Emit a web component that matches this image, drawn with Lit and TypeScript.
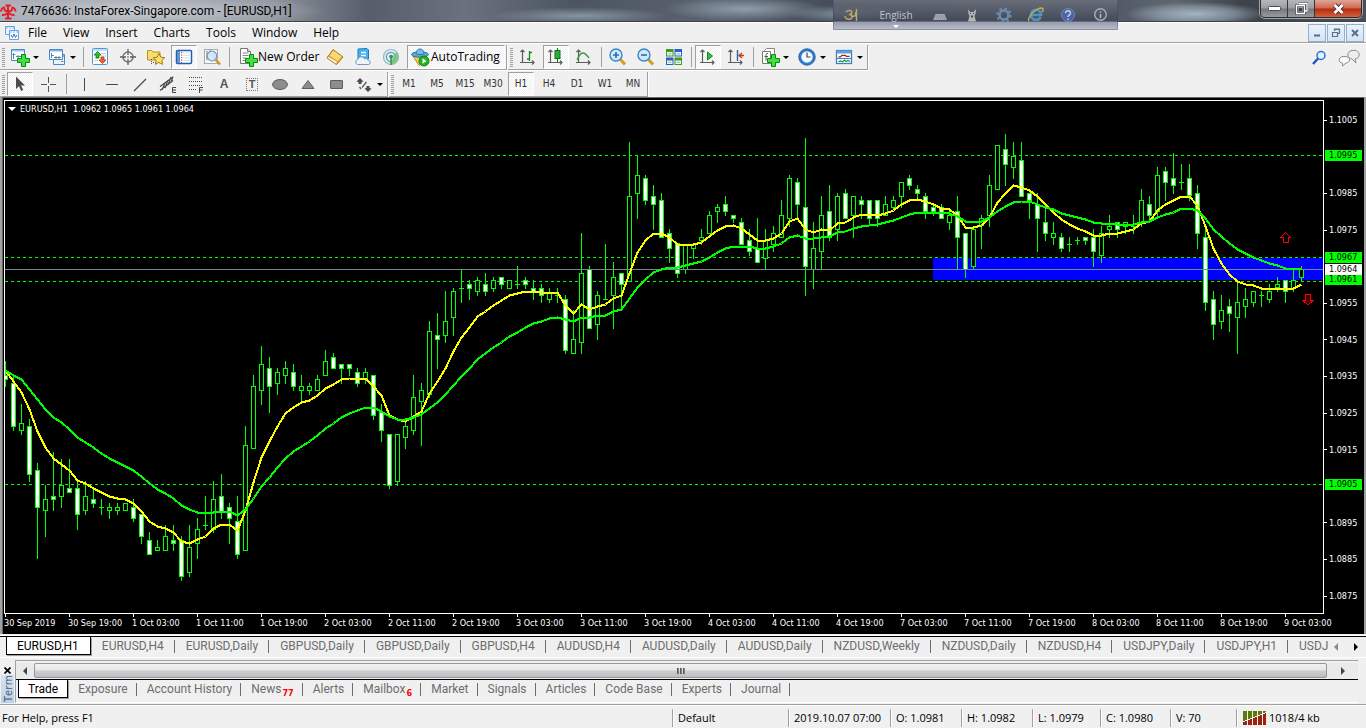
import { LitElement, html, svg, css, TemplateResult } from 'lit';
import { customElement, property, state } from 'lit/decorators.js';
import { classMap } from 'lit/directives/class-map.js';

/* ---------- market data, in plot units ---------- */

// high, body top, body bottom, low, 1 = bearish (filled)
const CANDLES: number[][] = [
  [361,375,380,387,1],[375,383,427,431,1],[404,423,431,435,0],[419,426,475,482,1],[463,470,508,559,1],
  [485,499,511,537,0],[452,496,500,511,1],[459,485,497,508,0],[459,488,493,493,1],[480,488,515,530,1],
  [481,496,511,515,0],[489,499,504,508,1],[499,507,508,515,0],[503,507,511,519,0],[503,507,511,515,0],
  [503,503,511,511,0],[499,507,519,522,1],[514,514,537,544,1],[532,540,555,555,1],[540,547,551,551,0],
  [525,536,551,551,0],[525,540,544,551,1],[536,540,577,581,1],[525,547,573,577,0],[518,529,544,559,0],
  [496,525,526,530,0],[481,499,530,533,0],[474,496,512,519,1],[503,507,519,544,1],[496,521,555,559,1],
  [426,445,551,551,0],[375,386,449,449,0],[346,364,391,405,0],[357,368,387,413,1],[368,372,384,395,0],
  [361,368,376,384,0],[364,372,387,391,1],[375,386,391,402,0],[383,386,391,395,0],[375,379,391,391,0],
  [350,361,376,376,0],[353,357,369,369,1],[364,364,369,384,1],[364,364,369,376,1],[368,372,384,387,1],
  [368,372,380,384,0],[375,375,416,420,1],[404,412,431,442,1],[434,434,486,489,1],[434,434,482,486,0],
  [422,426,438,449,0],[375,397,431,435,0],[383,390,402,446,0],[321,331,395,398,0],[313,335,340,369,1],
  [291,321,336,343,0],[288,291,318,336,0],[269,288,289,303,0],[280,284,289,300,1],[277,280,292,296,0],
  [273,284,292,296,1],[277,280,289,292,0],[277,277,285,289,1],[280,280,289,289,0],[266,284,285,289,0],
  [277,280,285,289,1],[280,288,292,300,1],[284,288,296,303,1],[288,292,300,303,0],[288,295,296,303,0],
  [295,299,351,354,1],[310,339,354,354,0],[233,273,343,354,0],[266,269,329,329,1],[291,295,325,340,0],
  [244,299,300,300,0],[262,277,296,329,0],[273,273,285,311,1],[142,196,282,282,0],[155,175,194,219,0],
  [175,178,201,205,1],[185,196,205,230,1],[193,200,238,238,1],[229,233,249,263,1],[243,243,274,278,1],
  [244,244,270,274,0],[244,244,249,259,0],[229,237,241,245,0],[211,215,234,234,0],[204,207,212,223,0],
  [196,204,212,216,1],[215,215,219,223,1],[218,222,245,245,1],[229,240,252,256,1],[218,248,263,263,1],
  [229,240,259,270,0],[226,233,245,252,0],[200,215,238,238,0],[175,178,219,227,0],[178,182,205,219,1],
  [138,207,267,296,1],[222,248,270,289,0],[196,215,252,270,0],[185,211,238,241,1],[193,196,230,241,0],
  [189,193,219,219,1],[196,196,216,238,0],[196,200,205,219,1],[200,200,219,226,1],[200,200,219,227,1],
  [196,204,216,216,0],[196,200,208,210,0],[182,182,197,208,0],[175,178,186,190,1],[185,189,194,201,1],
  [193,196,212,219,1],[204,207,212,216,1],[204,207,219,219,1],[210,215,223,230,0],[196,211,238,270,1],
  [233,233,270,278,1],[229,229,267,270,0],[215,218,226,249,0],[175,185,216,227,0],[145,145,190,190,0],
  [134,149,165,186,1],[142,156,168,179,0],[142,160,197,197,1],[193,193,201,219,1],[193,204,219,252,1],
  [205,222,234,241,1],[222,233,238,245,0],[233,237,249,252,1],[237,244,245,252,0],[237,240,241,245,0],
  [237,237,241,245,1],[229,237,252,267,1],[226,233,256,263,0],[215,226,230,238,0],[222,222,230,238,1],
  [222,222,227,234,0],[215,226,227,234,0],[189,200,223,227,0],[196,204,216,220,1],[167,175,212,217,0],
  [167,171,183,201,1],[153,178,186,194,1],[164,182,183,190,0],[164,178,196,201,1],[185,193,234,249,1],
  [229,237,303,311,1],[291,299,325,340,1],[295,310,322,329,0],[299,306,314,332,1],[281,302,318,354,0],
  [288,299,307,318,0],[291,291,303,307,0],[291,295,296,307,0],[284,291,300,303,0],[277,284,288,292,0],
  [280,280,292,303,1],[269,280,289,292,0],[266,269,278,281,0],
];

const SLOW = [370,375,379,389,399,409,417,422,429,437,442,447,453,458,462,466,470,476,483,489,493,498,505,509,512,
  512,512,511,511,515,509,498,486,477,467,458,451,446,441,435,428,423,417,413,410,407,407,411,416,419,419,417,414,
  408,402,394,385,376,368,359,353,347,342,336,332,327,323,321,318,317,319,321,317,317,315,315,311,309,298,287,279,
  272,269,267,267,265,263,261,257,252,248,246,246,246,248,248,246,243,237,235,238,238,237,236,232,231,228,226,225,
  224,222,220,217,214,212,212,212,212,213,216,221,221,221,217,211,206,202,201,201,204,207,209,213,215,217,219,222,
  223,223,224,224,224,222,221,217,214,212,208,208,210,218,229,236,243,249,253,257,260,263,265,268,268,268];

const FAST = [370,381,392,409,431,447,458,464,470,480,483,488,492,496,498,499,503,511,521,526,528,532,541,543,539,
  536,528,524,524,530,510,482,457,441,426,413,407,402,400,395,388,384,379,378,378,378,386,395,415,419,421,416,411,
  393,381,368,351,337,327,316,311,305,300,295,293,291,291,292,292,292,305,313,304,309,306,304,298,295,273,252,240,
  233,233,237,244,244,244,242,236,230,226,225,228,234,240,240,238,233,221,218,229,232,229,230,223,222,217,214,214,
  215,213,210,204,200,199,201,204,208,209,215,227,227,225,217,202,193,185,187,190,196,204,212,219,224,228,231,235,
  235,233,233,231,229,223,221,210,204,200,196,196,205,226,248,263,274,281,284,285,288,288,288,288,288,284];

const TIMES = ['30 Sep 2019','30 Sep 19:00','1 Oct 03:00','1 Oct 11:00','1 Oct 19:00','2 Oct 03:00','2 Oct 11:00',
  '2 Oct 19:00','3 Oct 03:00','3 Oct 11:00','3 Oct 19:00','4 Oct 03:00','4 Oct 11:00','4 Oct 19:00','7 Oct 03:00',
  '7 Oct 11:00','7 Oct 19:00','8 Oct 03:00','8 Oct 11:00','8 Oct 19:00','9 Oct 03:00'];

const SCALE = ['1.1005','1.0985','1.0975','1.0955','1.0945','1.0935','1.0925','1.0915','1.0895','1.0885','1.0875'];
const MARKS: [string, string][] = [['1.0995','level'],['1.0967','level'],['1.0961','level'],['1.0905','level'],['1.0964','last']];
const LEVELS = [155, 257, 281, 484];

// share of the plot height at which a price lies
const priceTop = (p: string) => ((1.1010532 - Number(p)) / 0.0140426) * 100;

/* ---------- icons ---------- */

const ico = (body: unknown, size = 20) =>
  html`<svg class="ico" width=${size} height=${size} viewBox="0 0 20 20" aria-hidden="true">${body}</svg>`;

const plus = svg`<path d="M11.500 7.500h4v4h4v4h-4v4h-4v-4h-4v-4h4z" fill="#3fe03f" stroke="#0b8a0b"/>`;
const axes = svg`<path d="M4.500 3v13M2 15.500h14M2.500 5l2-2 2 2M14 13.500l2 2-2 2" fill="none" stroke="#5c5c5c" stroke-width="1.200"/>`;
const miniWin = svg`<path d="M1.500 2.500h13v11h-13z" fill="#fff" stroke="#4a88c8"/><path d="M2 3h12v1.500H2z" fill="#9cc6ee"/><path d="M3.500 6v6M2.500 7.500h3M6 9.500h7M8 8v3M11.500 8v3" stroke="#5a86ad" fill="none"/>`;

const ICONS: Record<string, TemplateResult> = {
  newchart: ico(svg`${miniWin}${plus}`),
  profiles: ico(svg`<path d="M6.500 7.500h11v10h-11z" fill="#eaf4fd" stroke="#4a88c8"/><path d="M7 8h10v2H7z" fill="#7db4e6"/><path d="M2.500 2.500h13v10h-13z" fill="#fff" stroke="#4a88c8"/><path d="M3 3h12v1.500H3z" fill="#7db4e6"/><path d="M4.500 6v5M4 8.500h3M7 10.500h7M9 9v3M12 9v3M14 14.500h2.500" stroke="#5a86ad" fill="none"/>`),
  market: ico(svg`<rect x="2.500" y="1.500" width="15" height="16" rx="1" fill="#fff" stroke="#4e97dc"/><path d="M3 2h14v2H3z" fill="#bfe0fa"/><path d="M11 6.500h5M11 9h5M4 13.500h4M4 11h4" stroke="#c7ccd2"/><path d="M7.500 4.500l3.500 3.500H9v3H6V8H4z" fill="#2bbf2b" stroke="#0c7a12" stroke-width=".8"/><path d="M12.500 16.500L9 13h2v-3h3v3h2z" fill="#f0602e" stroke="#b8380d" stroke-width=".8"/>`),
  target: ico(svg`<circle cx="10" cy="10" r="5" fill="none" stroke="#777" stroke-width="1.600"/><path d="M10 2v6M10 12v6M2 10h6M12 10h6" stroke="#5e5e5e" stroke-width="1.300"/><circle cx="10" cy="10" r=".8" fill="#555"/>`),
  folder: ico(svg`<path d="M1.500 3.500h4l1.500 1.500h7v8H1.500z" fill="#f7dc6f" stroke="#b9921a"/><path d="M5.500 12v6M7 15.500h3" stroke="#555" stroke-dasharray="1 1"/><path d="M13 6.500l1.800 3.700 4 .5-3 2.700.8 4-3.600-2-3.600 2 .8-4-3-2.700 4-.5z" fill="#fbe36a" stroke="#a97c10"/>`),
  navigator: ico(svg`<rect x="2.500" y="3.500" width="15" height="13" rx="1" fill="#fff" stroke="#1d5fae" stroke-width="1.500"/><path d="M3 4h3v12H3z" fill="#5a95d6"/><path d="M7 6h10M7 8.500h10M7 11h10M7 13.500h10" stroke="#cfd9e6" stroke-width=".8"/><path d="M7.500 5v11" stroke="#e33" stroke-dasharray="1 1.500"/>`),
  tester: ico(svg`<rect x="2.500" y="2.500" width="13" height="14" fill="#f8f8f8" stroke="#aaa"/><path d="M5 4v9M8 3v5M12 4v8" stroke="#777"/><circle cx="10" cy="9" r="4.800" fill="#cfe8fa" fill-opacity=".9" stroke="#6f9fc8" stroke-width="1.300"/><path d="M13.500 12.500l4.500 5" stroke="#d09a1c" stroke-width="2.600"/>`),
  order: ico(svg`<path d="M2.500 1.500h7l3 3v12h-10z" fill="#fff" stroke="#777"/><path d="M9.500 1.500v3h3" fill="#ddd" stroke="#777"/><path d="M4.500 6h6M4.500 8.500h6M4.500 11h4M4.500 13.500h3" stroke="#888"/>${plus}`),
  book: ico(svg`<path d="M8 2.500l10 7.500-6.500 7.500L2 11z" fill="#e9b53a" stroke="#a8700f"/><path d="M2 11l9.500 6.500 1-3L3 9z" fill="#fff3cf" stroke="#b27a12" stroke-width=".7"/><path d="M8.500 3.500l8 6-4 4.500-8-5.500z" fill="#f7d873"/>`),
  vps: ico(svg`<path d="M5 2l9-.5 1.500 1.500v9H5z" fill="#47b3ee" stroke="#1b78bd"/><path d="M8 5.500h5M8 8.500h5" stroke="#e9f7ff" stroke-width="1.600"/><path d="M4.500 17.500a2.600 2.600 0 0 1 .3-5 3.500 3.500 0 0 1 6.500-.8 3 3 0 0 1 4 1.800 2 2 0 0 1 0 4z" fill="#eef3fa" stroke="#7e96b8"/>`),
  signal: ico(svg`<circle cx="10" cy="10" r="7.500" fill="#dff0ea" stroke="#8fb6cc" stroke-width="1.200"/><circle cx="10" cy="10" r="4.700" fill="none" stroke="#5f9dc0" stroke-width="1.200"/><path d="M10 10V17.500A7.500 7.500 0 0 0 17.500 10a7.500 7.500 0 0 0-2-5l-3 3z" fill="#6cc067" fill-opacity=".75"/><path d="M10 10v8" stroke="#3a9a3a" stroke-width="1.600"/><circle cx="10" cy="9.500" r="1.800" fill="#3e7ea8"/>`),
  auto: ico(svg`<path d="M3 9h13l-3 7-4 2.500z" fill="#f4cf52" stroke="#b78d1b"/><ellipse cx="10" cy="7.500" rx="8.500" ry="2.700" fill="#5aa6d6" stroke="#2d77ab"/><path d="M6 6.500c0-6 8-6 8 0-2 1.500-6 1.500-8 0z" fill="#79bce4" stroke="#2d77ab"/><circle cx="14" cy="14" r="5" fill="#22b522" stroke="#108410"/><path d="M12.500 11.200l4 2.800-4 2.800z" fill="#fff"/>`),
  bars: ico(svg`${axes}<path d="M11.500 4v10M9 12h2.500M11.500 5.500H14" stroke="#138a1c" stroke-width="1.300" fill="none"/>`),
  candles: ico(svg`${axes}<path d="M11.500 1v14" stroke="#0d6e12"/><rect x="9" y="3.500" width="5" height="8" fill="#24b43a" stroke="#0d6e12"/>`),
  line: ico(svg`${axes}<path d="M3 13c4-9 7-9 12-2" fill="none" stroke="#2da23a" stroke-width="1.300"/>`),
  zoomin: ico(svg`<path d="M12 12l5 5.500" stroke="#d2a21e" stroke-width="3.200"/><circle cx="8" cy="8" r="6" fill="#cfe9fb" stroke="#3987c9" stroke-width="1.400"/><path d="M5 8h6M8 5v6" stroke="#2a6bb0" stroke-width="1.600"/>`),
  zoomout: ico(svg`<path d="M12 12l5 5.500" stroke="#d2a21e" stroke-width="3.200"/><circle cx="8" cy="8" r="6" fill="#cfe9fb" stroke="#3987c9" stroke-width="1.400"/><path d="M5 8h6" stroke="#2a6bb0" stroke-width="1.600"/>`),
  tile: ico(svg`<path d="M2 2h7.500v7.500H2z" fill="#3a9a23"/><path d="M10.500 2H18v7.500h-7.500z" fill="#2a5fce"/><path d="M2 10.500h7.500V18H2z" fill="#2a5fce"/><path d="M10.500 10.500H18V18h-7.500z" fill="#3a9a23"/><path d="M3 5h5.500v3.500H3zM11.500 5H17v3.500h-5.500zM3 13.500h5.500V17H3zM11.500 13.500H17V17h-5.500z" fill="#f4faf0"/><path d="M4 6.800h3.500M12.500 6.800H16M4 15.300h3.500M12.500 15.300H16" stroke="#8ab"/>`),
  scroll: ico(svg`${axes}<path d="M9.500 5v8l5-4z" fill="#35c048" stroke="#11821e"/>`),
  shift: ico(svg`${axes}<path d="M11.500 3v11" stroke="#2a5fae" stroke-width="1.400"/><path d="M18 8.500h-5M16 6l-3 2.500 3 2.500" fill="none" stroke="#c3401b" stroke-width="1.400"/>`),
  indicators: ico(svg`<path d="M4.500 3.500l2-2h8v11h-10z" fill="#fff" stroke="#888"/><path d="M2.500 4.500h8v12h-8z" fill="#fff" stroke="#777"/><path d="M8 6.500c-2-.5-2 1-2 2v5M4.500 9.500h3.500" fill="none" stroke="#555"/>${plus}`),
  clock: ico(svg`<circle cx="10" cy="10" r="7" fill="#f4f9ff" stroke="#2b7bd2" stroke-width="2.600"/><circle cx="10" cy="10" r="8.300" fill="none" stroke="#1a5299" stroke-width=".7"/><path d="M10 5.500V10h3.500" fill="none" stroke="#445" stroke-width="1.200"/>`),
  template: ico(svg`<rect x="2.500" y="3.500" width="15" height="13" fill="#fff" stroke="#3a7fc6" stroke-width="1.300"/><path d="M2.500 3.500h15v3h-15z" fill="#5b9fe0"/><path d="M3 11.500h14" stroke="#3a7fc6"/><path d="M4.500 9.800h2l1.500-1.500h3l1.500 1h3" fill="none" stroke="#a3221b" stroke-width="1.200"/><path d="M4.500 14.800l2-.8 2 .8 2-1.800 1.500 1.500 2-1 2 1" fill="none" stroke="#24913a" stroke-width="1.200"/>`),
  cursor: ico(svg`<path d="M6 2.500v12.500l3-2.800 2.200 4.800 2-1-2.200-4.600h4z" fill="#4b4b4b"/>`),
  cross: ico(svg`<path d="M10.500 3v6M10.500 12v6M3 10.500h6M12 10.500h6" stroke="#555" shape-rendering="crispEdges"/>`),
  vline: ico(svg`<path d="M10.500 4v13" stroke="#4a4a4a" shape-rendering="crispEdges"/>`),
  hline: ico(svg`<path d="M4 10.500h12" stroke="#4a4a4a" shape-rendering="crispEdges"/>`),
  trend: ico(svg`<path d="M4 17L16 5" stroke="#4a4a4a" stroke-width="1.200"/>`),
  channel: ico(svg`<path d="M2 12.500L15 3M2 16.500L15 6.500M4 16l3-7M7 14l3-8M10 11l3-8M13 8.500l2-6" stroke="#4a4a4a" stroke-width="1.200"/><path d="M18 13.500h-3.500v5H18M14.500 16H18" fill="none" stroke="#444"/>`),
  fibo: ico(svg`<path d="M3 3.500h14M3 7.500h14M3 11.500h14M3 15.500h8" stroke="#4a4a4a" stroke-dasharray="1 1" shape-rendering="crispEdges"/><path d="M17 13.500h-3.500V19M13.500 16h3" fill="none" stroke="#444"/>`),
  oval: ico(svg`<ellipse cx="10" cy="10.500" rx="7.500" ry="5" fill="#8c8c8c" stroke="#5d5d5d"/>`),
  triangle: ico(svg`<path d="M10 6.500l6 8H4z" fill="#8c8c8c" stroke="#5d5d5d"/>`),
  rect: ico(svg`<rect x="4.500" y="6.500" width="12" height="8" rx=".5" fill="#8c8c8c" stroke="#5d5d5d"/>`),
  shapes: ico(svg`<path d="M6 4l3.500 3.500-2 .5v2h-3V8l-2-.5z" fill="#4b4b4b"/><path d="M14 18l-3.500-3.500 2-.5v-2h3v2l2 .5z" fill="#4b4b4b"/><path d="M5.500 13l1.500 2M8 13.500l4.500-5.500" fill="none" stroke="#5d5d5d" stroke-width="1.300"/>`),
  search: ico(svg`<circle cx="12" cy="7.500" r="4" fill="#e6f1ff" stroke="#2e6fd6" stroke-width="1.500"/><path d="M9 10.500l-5 5.500" stroke="#2455b8" stroke-width="2.400"/>`),
  chat: html`<svg class="ico" width="24" height="20" viewBox="0 0 24 20" aria-hidden="true"><path d="M15 2.500c9-1.500 9 8 3 8.500l1 4-4-4c-5-.5-6-7.500 0-8.500z" fill="#eee" stroke="#8b8b8b"/><path d="M7 8.500c7-.5 7 6 2 6.500l-3.500 3v-3c-5-.5-4.500-6.500 1.500-6.500z" fill="#fafafa" stroke="#8b8b8b"/></svg>`,
};

const tbStyles = css`
  button { font: inherit; color: inherit; background: none; border: 0; padding: 0; margin: 0; }
  .ico { display: block; flex: none; }
`;

/* ---------- toolbar ---------- */

interface Tool { id: string; label: string; text?: string; drop?: boolean; on?: boolean; kind?: string; }

@customElement('tool-group')
class ToolGroup extends LitElement {
  @property({ attribute: false }) tools: Tool[] = [];

  static styles = [tbStyles, css`
    :host { display: flex; align-items: stretch; height: 25px; box-sizing: border-box; border-right: 1px solid #a0a0a0; border-bottom: 1px solid #a0a0a0;
      box-shadow: 1px 1px 0 #fff; color: #000; font: 12px/16px "Open Sans", "Noto Sans", sans-serif; }
    .grip { width: 3px; margin: 3px 1px 2px 2px; background: repeating-linear-gradient(#a0a0a0 0 1px, transparent 1px 2px); }
    .sep { width: 1px; margin: 2px 2px 2px 3px; background: #a0a0a0; }
    .sep.wide { margin: 2px 3px 2px 4px; }
    .tool { width: 28px; display: flex; align-items: center; justify-content: center; box-sizing: border-box; }
    .tool.drop { width: 37px; justify-content: flex-start; padding-left: 4px; gap: 3px; }
    .tool.order { width: 89px; justify-content: flex-start; padding-left: 6px; white-space: nowrap; }
    .tool.on { border: 1px solid; border-color: #a0a0a0 #fff #fff #a0a0a0; margin: 0 1px; width: 26px;
      background: repeating-conic-gradient(#fff 0 25%, #f0f0f0 0 50%) 0 0 / 2px 2px; }
    .tool.auto.on { width: 98px; padding-left: 2px; margin: 0 1px 0 2px; gap: 1px; justify-content: flex-start; white-space: nowrap; }
    .frame { font: 10px/14px "DejaVu Sans Condensed", "DejaVu Sans", sans-serif; color: #333; }
    .glyph { font: bold 12px/16px "Liberation Sans", sans-serif; color: #555; }
    .boxed { font: bold 11px/11px "Liberation Sans", sans-serif; color: #555; border: 1px dotted #777; width: 10px; text-align: center; }
    .tri { width: 0; height: 0; border: 3px solid transparent; border-top-color: #000; border-bottom: 0; }
  `];

  private pick(t: Tool) {
    if (t.kind !== 'frame') return;
    this.tools = this.tools.map(x => (x.kind === 'frame' ? { ...x, on: x.id === t.id } : x));
  }

  render() {
    return html`<span class="grip"></span>${this.tools.map(t => {
      if (t.id === '|') return html`<span class="sep ${t.kind ?? ''}"></span>`;
      const face = t.kind === 'frame' || t.kind === 'glyph' || t.kind === 'boxed'
        ? html`<span class=${t.kind}>${t.text}</span>`
        : html`${ICONS[t.id]}${t.text ? html`<span>${t.text}</span>` : ''}`;
      return html`<button class=${classMap({ tool: true, on: !!t.on, drop: !!t.drop, order: t.id === 'order', auto: t.id === 'auto' })}
        aria-label=${t.label} aria-pressed=${t.on ? 'true' : 'false'} @click=${() => this.pick(t)}>${face}${t.drop ? html`<i class="tri"></i>` : ''}</button>`;
    })}`;
  }
}

/* ---------- chart ---------- */

@customElement('price-chart')
class PriceChart extends LitElement {
  static styles = css`
    :host { display: grid; grid-template-columns: minmax(0, 1fr) 40px; grid-template-rows: minmax(0, 1fr) 20px; background: #000;
      color: #fff; font: 9px/12px "DejaVu Sans Condensed", "DejaVu Sans", sans-serif; padding: 3px 0 0 2px; min-height: 0; box-sizing: border-box;
      border: solid #a0a0a0; border-width: 0 2px 0 2px; box-shadow: inset 0 1px 0 #696969, inset 1px 0 0 #696969; overflow: hidden; }
    .plot { position: relative; border: 1px solid #fff; min-width: 0; min-height: 0; }
    .plot svg { display: block; width: 100%; height: 100%; }
    .caption { position: absolute; left: 3px; top: 2px; display: flex; align-items: center; gap: 4px; white-space: pre; }
    .tri { width: 0; height: 0; border: 4px solid transparent; border-top-color: #fff; border-bottom: 0; }
    .prices { position: relative; }
    .price { position: absolute; left: 0; right: 0; height: 12px; margin-top: -6px; display: flex; align-items: center; }
    .price::before { content: ""; width: 3px; height: 1px; background: #fff; margin-right: 2px; }
    .price.level, .price.last { height: 11px; line-height: 11px; margin-top: -7px; left: 1px; right: 2px; color: #000; background: #0f0; padding-left: 4px; }
    .price.last { background: #fff; margin-top: -6px; z-index: 1; }
    .price.level::before, .price.last::before { content: none; }
    .times { grid-column: 1 / 3; display: grid; grid-template-columns: repeat(20, 64fr) 80fr; white-space: nowrap; }
    .time::before { content: ""; display: block; width: 1px; height: 3px; margin-left: 1px; background: #fff; }
  `;

  private path(ys: number[]) {
    return ys.map((y, i) => `${i ? 'L' : 'M'}${5.5 + i * 8} ${y + 0.5}`).join('');
  }

  render() {
    return html`
      <div class="plot">
        <svg viewBox="5 101 1318 512" preserveAspectRatio="none" shape-rendering="crispEdges" role="img" aria-label="EURUSD H1 candlestick chart">
          <rect x="933" y="258" width="390" height="22" fill="#00f"></rect>
          ${LEVELS.map(y => svg`<path d="M5 ${y + 0.5}H1323" stroke="#0f0" stroke-dasharray="3 3"/>`)}
          ${CANDLES.map(([h, t, b, l, f], i) => {
            const x = 5 + i * 8;
            return svg`<path d="M${x + 0.5} ${h}V${l}" stroke="#0f0"/>${b - t < 2
              ? svg`<path d="M${x - 2} ${t + 0.5}h5" stroke="#0f0"/>`
              : svg`<rect x=${x - 1.5} y=${t + 0.5} width="4" height=${b - t - 1} fill=${f ? '#fff' : '#000'} stroke="#0f0"/>`}`;
          })}
          <path d="M5 269.500H1323" stroke="#778899"></path>
          <path d=${this.path(FAST)} fill="none" stroke="#ff0" stroke-width="2"></path>
          <path d=${this.path(SLOW)} fill="none" stroke="#0f0" stroke-width="2"></path>
          <path d="M1285.500 232.500l5 5h-2.500v5h-5v-5h-2.500z" fill="none" stroke="#f00000"></path>
          <path d="M1305.500 294.500h5v6h2.500l-5 4.500-5-4.500h2.500z" fill="#400" stroke="#f00000"></path>
        </svg>
        <div class="caption"><i class="tri"></i><span>EURUSD,H1  1.0962 1.0965 1.0961 1.0964</span></div>
      </div>
      <div class="prices">
        ${SCALE.map(p => html`<span class="price" style="top:${priceTop(p)}%">${p}</span>`)}
        ${MARKS.map(([p, k]) => html`<span class="price ${k}" style="top:${priceTop(p)}%">${p}</span>`)}
      </div>
      <div class="times">${TIMES.map(t => html`<span class="time">${t}</span>`)}</div>`;
  }
}

/* ---------- page ---------- */

const CHART_TABS = ['EURUSD,H1','EURUSD,H4','EURUSD,Daily','GBPUSD,Daily','GBPUSD,Daily','GBPUSD,H4','AUDUSD,H4','AUDUSD,Daily',
  'AUDUSD,Daily','NZDUSD,Weekly','NZDUSD,Daily','NZDUSD,H4','USDJPY,Daily','USDJPY,H1','USDJ'];
const TERM_TABS: [string, string?][] = [['Trade'],['Exposure'],['Account History'],['News','77'],['Alerts'],['Mailbox','6'],['Market'],
  ['Signals'],['Articles'],['Code Base'],['Experts'],['Journal']];

const MAIN_A: Tool[] = [
  { id: 'newchart', label: 'New chart', drop: true }, { id: 'profiles', label: 'Profiles', drop: true }, { id: '|', label: '' },
  { id: 'market', label: 'Market watch' }, { id: 'target', label: 'Data window' }, { id: 'folder', label: 'Navigator' },
  { id: 'navigator', label: 'Terminal', on: true }, { id: 'tester', label: 'Strategy tester' }, { id: '|', label: '' },
  { id: 'order', label: 'New Order', text: 'New Order' }, { id: 'book', label: 'MetaEditor' }, { id: 'vps', label: 'Virtual hosting' },
  { id: 'signal', label: 'Signals' }, { id: 'auto', label: 'AutoTrading', text: 'AutoTrading', on: true },
];
const MAIN_B: Tool[] = [
  { id: 'bars', label: 'Bar chart' }, { id: 'candles', label: 'Candlesticks', on: true }, { id: 'line', label: 'Line chart' }, { id: '|', label: '' },
  { id: 'zoomin', label: 'Zoom in' }, { id: 'zoomout', label: 'Zoom out' }, { id: 'tile', label: 'Tile windows' }, { id: '|', label: '' },
  { id: 'scroll', label: 'Auto scroll', on: true }, { id: 'shift', label: 'Chart shift' }, { id: '|', label: '' },
  { id: 'indicators', label: 'Indicators', drop: true }, { id: 'clock', label: 'Periods', drop: true }, { id: 'template', label: 'Templates', drop: true },
];
const DRAW: Tool[] = [
  { id: 'cursor', label: 'Cursor', on: true }, { id: 'cross', label: 'Crosshair' }, { id: '|', label: '', kind: 'wide' },
  { id: 'vline', label: 'Vertical line' }, { id: 'hline', label: 'Horizontal line' }, { id: 'trend', label: 'Trendline' },
  { id: 'channel', label: 'Equidistant channel' }, { id: 'fibo', label: 'Fibonacci retracement' },
  { id: 'text', label: 'Text', text: 'A', kind: 'glyph' }, { id: 'label', label: 'Text label', text: 'T', kind: 'boxed' },
  { id: 'oval', label: 'Ellipse' }, { id: 'triangle', label: 'Triangle' }, { id: 'rect', label: 'Rectangle' },
  { id: 'shapes', label: 'Arrows', drop: true },
];
const FRAMES: Tool[] = ['M1','M5','M15','M30','H1','H4','D1','W1','MN'].map(t => ({ id: t, label: t, text: t, kind: 'frame', on: t === 'H1' }));

@customElement('app-root')
class AppRoot extends LitElement {
  @state() private chartTab = 0;
  @state() private termTab = 0;

  static styles = [tbStyles, css`
    :host { display: flex; flex-direction: column; height: 100vh; overflow: hidden; position: relative; background: #f0f0f0; color: #000;
      font: 12px/16px "Open Sans", "Noto Sans", sans-serif; }
    .title { display: flex; align-items: center; height: 21px; border-bottom: 1px solid #3c4048; padding: 0 4px 0 0; gap: 5px;
      font: 12px/16px Roboto, "Open Sans", sans-serif; box-sizing: content-box; flex: none;
      background:
        radial-gradient(180px 18px at 145px 11px, rgba(214,216,222,.8), rgba(190,193,200,.5) 60%, transparent),
        radial-gradient(90px 9px at 580px 16px, rgba(150,165,178,.8), transparent),
        radial-gradient(80px 12px at 745px 9px, rgba(150,164,178,.9), transparent),
        radial-gradient(60px 9px at 850px 14px, rgba(150,170,185,.8), transparent),
        radial-gradient(70px 12px at 1195px 14px, rgba(170,185,198,.95), rgba(140,155,168,.7) 60%, transparent),
        linear-gradient(90deg, #a9adb5 0, #8d929b 20%, #565e6a 27%, #69727e 34%, #4c545f 42%, #5a6370 52%, #434b56 62%, #4e5561 80%, #5f6770 86%, #3d434b 91%, #4a4f57 100%); }
    .title .logo { display: block; margin-right: -1px; }
    .title .name { flex: 1; min-width: 0; }
    .winbtns { align-self: flex-start; display: flex; height: 17px; border: 1px solid #2b2e33; border-top: 0; border-radius: 0 0 5px 5px; overflow: hidden; box-shadow: 0 0 0 1px rgba(255,255,255,.5); }
    .winbtns button { width: 27px; display: flex; align-items: center; justify-content: center; border-right: 1px solid #33373d; background: linear-gradient(#b4b7bb, #9a9ea4 48%, #74787e 52%, #979ba1); }
    .winbtns .close { width: 46px; border: 0; background: linear-gradient(#e0a596, #cf6650 48%, #b42a0e 52%, #d5603c); }
    .lang { position: absolute; z-index: 2; top: 0; right: 248px; width: 285px; height: 30px; box-sizing: border-box; border: 1px solid rgba(60,66,80,.35); border-top: 0; border-bottom-color: #8b90a0;
      background: linear-gradient(rgba(110,116,126,.8), rgba(66,72,88,.85) 72%, rgba(140,146,164,.9) 76%, rgba(176,180,196,.9)); color: #c3c6cc; font: 10px/14px "Open Sans", sans-serif; }
    .lang .row { display: grid; grid-template-columns: 34px 56px repeat(6, 32px); align-items: center; height: 29px; }
    .lang button { display: flex; flex-direction: column; align-items: center; justify-content: center; height: 28px; }
    .lang .tri { width: 0; height: 0; border: 3px solid transparent; border-top-color: #fff; border-bottom: 0; margin-top: 3px; }
    .lang .name { padding-top: 6px; }
    .menu { display: flex; align-items: center; height: 19px; border-bottom: 1px solid #a0a0a0; border-top: 1px solid #fff; box-shadow: 0 1px 0 #fff; padding: 0 2px 0 5px; flex: none; }
    .menu nav { display: flex; flex: 1; padding-left: 1px; }
    .menu nav button { padding: 0 8px; }
    .mdi { display: flex; gap: 1px; }
    .mdi button { width: 18px; height: 18px; box-sizing: border-box; border: 1px solid #96b0cc; background: linear-gradient(#eaf3fc, #d3e4f6); display: flex; align-items: center; justify-content: center; }
    .bars { padding: 2px 0 0; display: flex; flex-direction: column; gap: 2px; flex: none; }
    .bar { display: flex; align-items: center; gap: 1px; }
    .bar .right { margin-left: auto; display: flex; gap: 8px; padding-right: 5px; }
    price-chart { flex: 1; }
    .tabs { display: flex; font: 12px/16px Roboto, "Open Sans", sans-serif; color: #6d6d6d; }
    .tabs button { flex: none; display: flex; align-items: flex-start; height: 19px; position: relative; }
    .tabs button.on { background: #fff; color: #000; border: solid #000; border-width: 0 1px 1px 1px; box-shadow: 1px 1px 0 #a0a0a0; }
    .tabs button:not(.on)::after { content: ""; position: absolute; right: 0; top: 3px; height: 13px; width: 1px; background: #6d6d6d; }
    .charts { border-top: 1px solid #000; margin-top: 2px; padding-left: 6px; height: 20px; flex: none; box-shadow: 0 -1px 0 #fff, 0 1px 0 #fff; }
    .charts .strip { display: flex; flex: 1; min-width: 0; overflow: hidden; height: 20px; }
    .charts button { padding: 1px 11px; }
    .charts .strip button.on { padding: 1px 11px 0 10px; height: 18px; }
    .charts .arrows { display: flex; width: 32px; flex: none; align-items: center; justify-content: space-between; padding: 0 8px 0 0; box-sizing: border-box; }
    .charts .arrows button { padding: 0; height: auto; }
    .charts .arrows button::after { content: none; }
    .term { display: grid; grid-template-columns: 15px minmax(0, 1fr); margin-top: 3px; flex: none; }
    .side { display: flex; flex-direction: column; align-items: center; gap: 4px; padding-top: 2px; }
    .side .x { height: 9px; }
    .side .vert { writing-mode: vertical-rl; transform: rotate(180deg); background: linear-gradient(#bcd0e4, #d5e3f1); color: #42566e; width: 13px; height: 28px; line-height: 13px; font-size: 11px; text-align: center; }
    .body { border-top: 1px solid #a0a0a0; border-left: 1px solid #a0a0a0; margin-right: 8px; height: 41px; border-bottom: 1px solid #fff; }
    .scroll { display: grid; grid-template-columns: 18px minmax(0, 1fr) 31px; height: 15px; margin: 2px 0 1px; background: #eaeaea; align-items: stretch; }
    .scroll button { display: flex; align-items: center; justify-content: center; }
    .scroll .thumb { border: 1px solid #979797; border-radius: 2px; background: linear-gradient(#f3f3f3, #e6e6e8 48%, #cfcfd2 52%, #bdbdc2); display: flex; align-items: center; justify-content: center; gap: 1px; box-sizing: border-box; }
    .thumb i { width: 2px; height: 6px; background: linear-gradient(90deg, #444, #999); }
    .terms { border-top: 1px solid #000; padding-left: 2px; }
    .terms button { padding: 1px 9px 0 10px; height: 20px; }
    .terms button.on { padding: 1px 9px 0 9px; height: 18px; }
    .badge { color: #f00; font: bold 9px/12px "DejaVu Sans Condensed", sans-serif; align-self: flex-start; padding: 6px 0 0 1px; }
    .status { display: grid; grid-template-columns: minmax(0, 1fr) 116px 102px 71px 71px 68px 70px 66px 130px; height: 23px; flex: none; margin-top: 1px; border-top: 1px solid #a0a0a0; box-shadow: inset 0 1px 0 #fff; font-size: 11px; align-items: center; white-space: nowrap; }
    .status span { height: 18px; line-height: 18px; border-left: 1px solid #a0a0a0; box-shadow: inset 1px 0 0 #fff; padding-left: 5px; display: flex; align-items: center; gap: 3px; box-sizing: border-box; margin-top: 2px; }
    .status span:first-child { border: 0; box-shadow: none; padding-left: 2px; }
  `];

  private tri(dir: 'l' | 'r', color: string) {
    return html`<svg width="5" height="8" viewBox="0 0 5 8" aria-hidden="true"><path d=${dir === 'l' ? 'M4 0v8L0 4z' : 'M1 0v8l4-4z'} fill=${color}></path></svg>`;
  }

  render() {
    const bars = Array.from({ length: 10 }, (_, i) => i);
    return html`
      <header class="title">
        <svg class="logo" width="17" height="18" viewBox="0 0 17 18" aria-hidden="true"><path d="M8 3v14M5 16.500h6.500M8.500 9.500C5.500 9.500 4 8 4 5M8 9.500c3 0 4.500-1.500 4.500-4.500M1 9.500C1 7 3 5.500 5 5.500M15.500 9.500c0-2.500-2-4-4-4M2 13c2.500.5 4-.5 6-2M14.500 13c-2.500.5-4-.5-6-2M5.500 3.500h5.500" fill="none" stroke="#e31e24" stroke-width="2"/></svg>
        <span class="name">7476636: InstaForex-Singapore.com - [EURUSD,H1]</span>
        <div class="winbtns">
          <button aria-label="Minimize"><svg width="13" height="5" viewBox="0 0 13 5"><rect x=".5" y=".5" width="12" height="4" rx="1" fill="#fff" stroke="#4a4e55"/></svg></button>
          <button aria-label="Restore"><svg width="13" height="13" viewBox="0 0 13 13"><path d="M4 1.500h8v7.500h-2M1.500 3.500h8v8h-8z" fill="none" stroke="#3d4148" stroke-width="2.600"/><path d="M4 1.500h8v7.500h-2M1.500 3.500h8v8h-8z" fill="none" stroke="#fff" stroke-width="1.300"/><path d="M4 6h3v3H4z" fill="#3d4148"/></svg></button>
          <button class="close" aria-label="Close"><svg width="13" height="12" viewBox="0 0 13 12"><path d="M2.500 2l8 8M10.500 2l-8 8" stroke="#57322c" stroke-width="4.600"/><path d="M2.500 2l8 8M10.500 2l-8 8" stroke="#fff" stroke-width="2.800"/></svg></button>
        </div>
      </header>
      <div class="lang"><div class="row">
        <button aria-label="Input tool"><svg width="16" height="16" viewBox="0 0 16 16"><path d="M3 5c3-3 7-1 5.500 1.500C7.500 8 6 7.500 6 7.500M2 9c0 4 7 4.500 7 1C9 8 7.500 7.500 6.500 7.500M9 9c3 1 4.500-1 3.500-4M13.500 2v12" fill="none" stroke="#bfa868" stroke-width="1.400"/></svg></button>
        <button class="name">English<i class="tri"></i></button>
        <button aria-label="Keyboard"><svg width="16" height="12" viewBox="0 0 16 12"><path d="M3.500 5h9l2.500 6H1z" fill="#a3a8b0"/><path d="M3 7h10M2 9h12" stroke="#7d828c" stroke-dasharray="1 1"/></svg></button>
        <button aria-label="Mascot"><svg width="14" height="16" viewBox="0 0 14 16"><path d="M3 2l2 3h3.500L11 2l-.5 5-1 2 1.500 5.500H3L4.500 9 3.500 7z" fill="#b4b6ba"/><path d="M5 6h1v1H5zM8 6h1v1H8zM6 8.500h2v2H6z" fill="#444"/></svg></button>
        <button aria-label="Settings"><svg width="16" height="16" viewBox="0 0 16 16"><circle cx="8" cy="8" r="4.500" fill="none" stroke="#6c8cab" stroke-width="2.600"/><circle cx="8" cy="8" r="6.600" fill="none" stroke="#6c8cab" stroke-width="2" stroke-dasharray="2.600 2.600"/></svg></button>
        <button aria-label="Browser"><svg width="18" height="17" viewBox="0 0 18 17"><path d="M4 9h10c0-7-10-7-10 0 0 6 8 6 9.500 2" fill="none" stroke="#4f93c4" stroke-width="2.600"/><path d="M2 15C0 12 8 2 15 2c2 .5 1 3 0 4" fill="none" stroke="#c8a94e" stroke-width="1.400"/></svg></button>
        <button aria-label="Help"><svg width="16" height="16" viewBox="0 0 16 16"><circle cx="8" cy="8" r="6.500" fill="#4a64a6" stroke="#7486b5"/><path d="M5.500 6.300c0-3.300 5-3.200 5 0C10.500 8 8 8 8 10M8 11.500v1.500" fill="none" stroke="#bcc6dd" stroke-width="1.600"/></svg></button>
        <button aria-label="About"><svg width="15" height="15" viewBox="0 0 15 15"><circle cx="7.500" cy="7.500" r="5.800" fill="none" stroke="#a9aeb6" stroke-width="1.400"/><path d="M7.500 4.500v1.300M7.500 7v4" stroke="#b9bdc4" stroke-width="1.500"/></svg></button>
      </div></div>
      <div class="menu">
        <svg width="14" height="14" viewBox="0 0 14 14" aria-hidden="true"><path d="M.5.500h9v8h-9z" fill="#eaf4ff" stroke="#6aa0e0"/><path d="M4.500 4.500h9v9h-9z" fill="#f6fbff" stroke="#6aa0e0"/><path d="M1 2h8M5 6h8" stroke="#8fbdf0" stroke-dasharray="2 1"/><path d="M6 9l1.500 2.500L9 8l1.500 3.500L12 9" fill="none" stroke="#3c76c4"/></svg>
        <nav>${['File','View','Insert','Charts','Tools','Window','Help'].map(m => html`<button>${m}</button>`)}</nav>
        <div class="mdi">
          <button aria-label="Minimize chart"><svg width="10" height="10" viewBox="0 0 10 10"><path d="M2 7.500h6" stroke="#5b6f86" stroke-width="2"/></svg></button>
          <button aria-label="Restore chart"><svg width="10" height="10" viewBox="0 0 10 10"><path d="M3.500 3V1.500h5v4H7M1.500 4.500h5v4h-5zM3 1h6M1 4.500h6" fill="none" stroke="#5b6f86" stroke-width="1.200"/></svg></button>
          <button aria-label="Close chart"><svg width="10" height="10" viewBox="0 0 10 10"><path d="M2 2l6 6M8 2L2 8" stroke="#5b6f86" stroke-width="2"/></svg></button>
        </div>
      </div>
      <div class="bars">
        <div class="bar"><tool-group .tools=${MAIN_A}></tool-group><tool-group .tools=${MAIN_B}></tool-group>
          <div class="right"><button aria-label="Search">${ICONS.search}</button><button aria-label="Community chat">${ICONS.chat}</button></div></div>
        <div class="bar"><tool-group .tools=${DRAW}></tool-group><tool-group .tools=${FRAMES}></tool-group></div>
      </div>
      <price-chart></price-chart>
      <div class="tabs charts"><div class="strip">
        ${CHART_TABS.map((t, i) => html`<button class=${i === this.chartTab ? 'on' : ''} @click=${() => (this.chartTab = i)}>${t}</button>`)}</div>
        <div class="arrows"><button aria-label="Scroll tabs left">${this.tri('l', '#888')}</button><button aria-label="Scroll tabs right">${this.tri('r', '#000')}</button></div>
      </div>
      <section class="term">
        <div class="side">
          <button class="x" aria-label="Close terminal"><svg width="7" height="7" viewBox="0 0 7 7"><path d="M.5.500l6 6M6.500.500l-6 6" stroke="#000" stroke-width="1.700"/></svg></button>
          <span class="vert">Term</span>
        </div>
        <div class="body">
          <div class="scroll"><button aria-label="Scroll left">${this.tri('l', '#444')}</button><div class="thumb"><i></i><i></i><i></i></div><button aria-label="Scroll right">${this.tri('r', '#444')}</button></div>
          <div class="tabs terms">${TERM_TABS.map(([t, n], i) => html`<button class=${i === this.termTab ? 'on' : ''} @click=${() => (this.termTab = i)}>${t}${n ? html`<span class="badge">${n}</span>` : ''}</button>`)}</div>
        </div>
      </section>
      <footer class="status">
        <span>For Help, press F1</span><span>Default</span><span>2019.10.07 07:00</span><span>O: 1.0981</span><span>H: 1.0982</span><span>L: 1.0979</span><span>C: 1.0980</span><span>V: 70</span>
        <span><svg width="24" height="14" viewBox="0 0 24 14" shape-rendering="crispEdges" aria-hidden="true">${bars.map(i => svg`<path d="M${1.5 + i * 2.5} 0V${10 - i}" stroke="#5b7a0c" stroke-width="2"/><path d="M${1.5 + i * 2.5} ${11 - i}V14" stroke="#a02010" stroke-width="2"/>`)}</svg>1018/4 kb</span>
      </footer>`;
  }
}
